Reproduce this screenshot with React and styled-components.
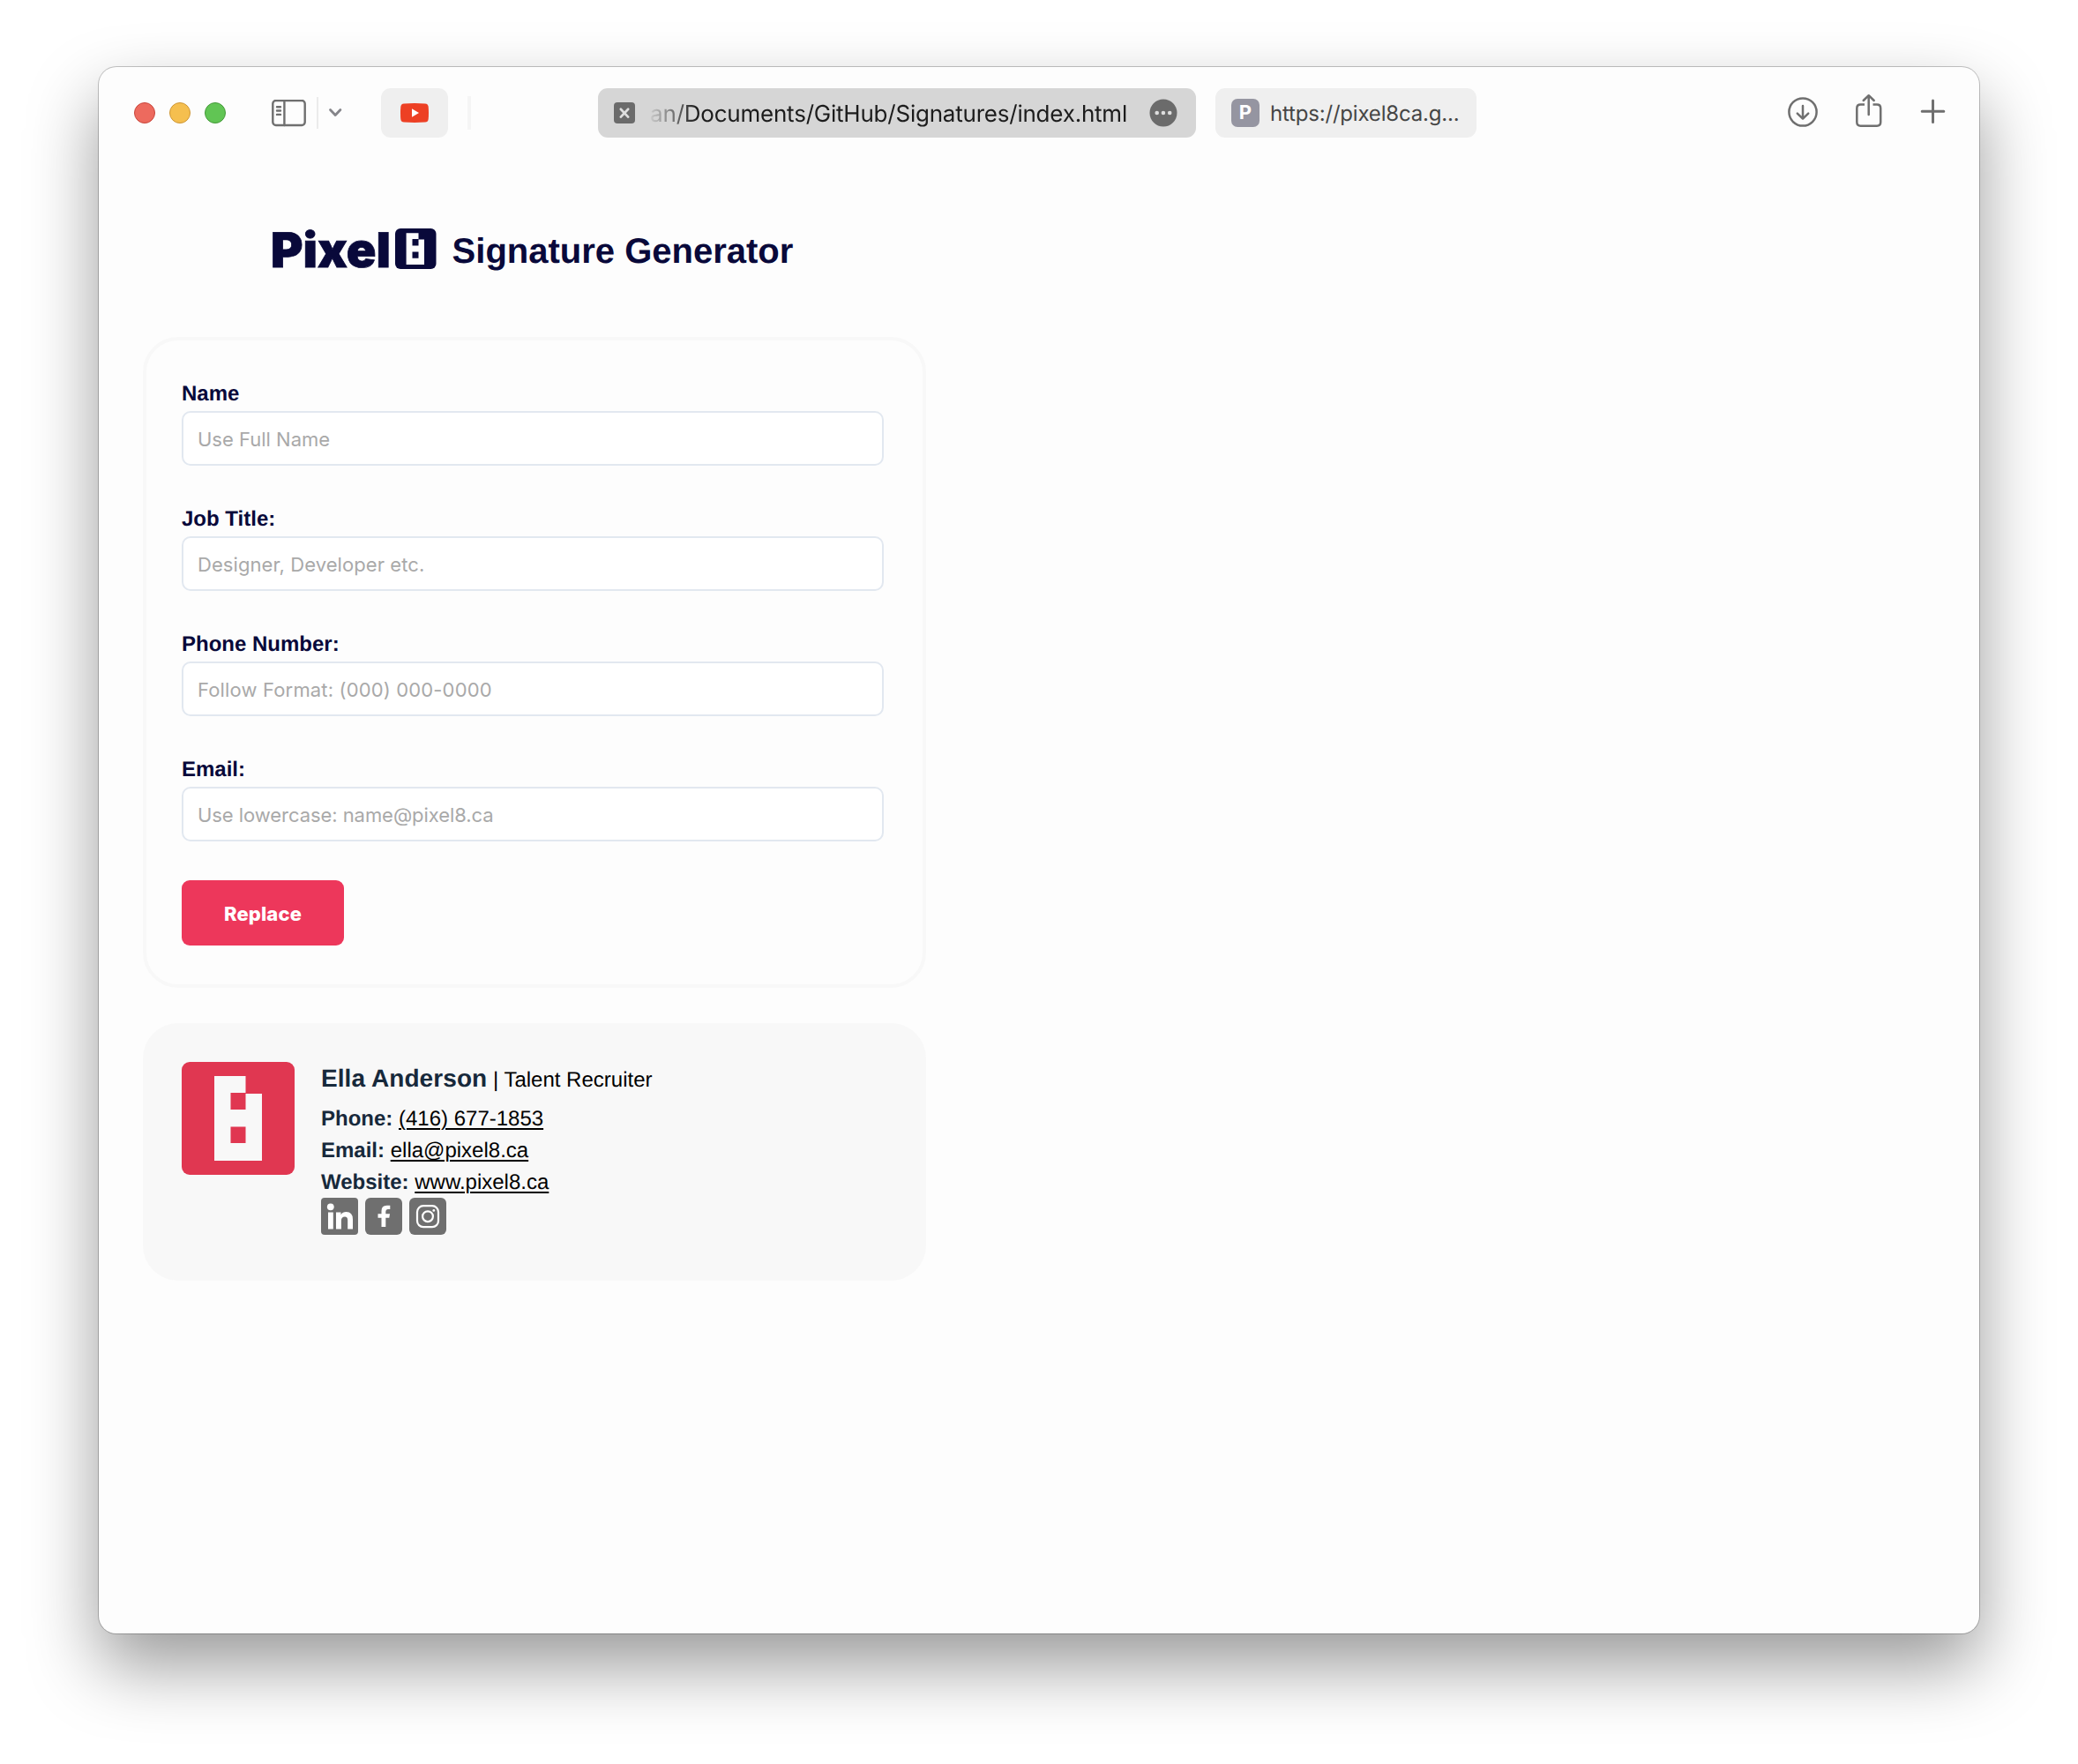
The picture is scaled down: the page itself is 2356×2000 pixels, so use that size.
import React from "react";
import styled, { createGlobalStyle, css } from "styled-components";

const ui = `Inter, "Liberation Sans", sans-serif`;
const arial = `"Liberation Sans", Arial, sans-serif`;

const GlobalStyle = createGlobalStyle`
  * { box-sizing: border-box; }
  body { margin: 0; background: #fff; text-rendering: geometricPrecision; }
`;

const Desktop = styled.div`
  width: 2356px;
  height: 2000px;
  padding: 76px 112px 148px;
  overflow: hidden;
`;

const Window = styled.div`
  height: 1776px;
  border-radius: 20px;
  background: #fdfdfd;
  box-shadow: 0 0 0 1px rgba(0, 0, 0, 0.22), 0 37px 80px rgba(0, 0, 0, 0.4);
`;

const Toolbar = styled.header`
  height: 104px;
  display: flex;
  align-items: center;
  padding: 0 38px 0 40px;
  font-family: ${ui};
`;

const Lights = styled.div`
  display: flex;
  gap: 16px;
`;

const Light = styled.span`
  width: 24px;
  height: 24px;
  border-radius: 50%;
  background: ${(p) => p.$fill};
  border: 1px solid ${(p) => p.$edge};
`;

const Divider = styled.span`
  width: ${(p) => p.$w}px;
  height: ${(p) => p.$h}px;
  background: ${(p) => p.$color};
`;

const SidebarGroup = styled.div`
  display: flex;
  align-items: center;
  margin-left: 52px;
  width: 80px;
  justify-content: space-between;
`;

const PinnedTab = styled.div`
  width: 76px;
  height: 56px;
  margin: 0 22px 0 44px;
  border-radius: 11px;
  background: #efefef;
  display: flex;
  align-items: center;
  justify-content: center;
`;

const Tab = styled.div`
  height: 56px;
  border-radius: 11px;
  display: flex;
  align-items: center;
  white-space: nowrap;
  ${(p) =>
    p.$active
      ? css`
          width: 678px;
          margin-left: 144px;
          padding: 0 21px 0 18px;
          background: #d6d6d6;
        `
      : css`
          width: 296px;
          margin-left: 22px;
          padding: 0 18px;
          background: #efefef;
        `}
`;

const Address = styled.span`
  flex: 1;
  display: flex;
  justify-content: flex-end;
  margin: 4px 25px 0 14px;
  font-size: 26px;
  line-height: 36px;
  letter-spacing: -0.22px;
  color: #1c1c1c;
  mask-image: linear-gradient(to right, transparent 0, #000 56px);
`;

const TabTitle = styled.span`
  margin: 1px 0 0 12px;
  font-size: 24px;
  line-height: 36px;
  letter-spacing: -0.19px;
  color: #454545;
`;

const Favicon = styled.span`
  width: 32px;
  height: 32px;
  border-radius: 7px;
  background: #9595a1;
  color: #fff;
  font-size: 22px;
  font-weight: 700;
  line-height: 33px;
  text-align: center;
`;

const Actions = styled.div`
  margin-left: auto;
  display: flex;
  align-items: center;
`;

const Page = styled.main`
  width: 938px;
  padding: 74px 0 0 50px;
  font-family: ${arial};
`;

const Heading = styled.h1`
  margin: 0;
  height: 54px;
  padding: 0 3px 0 0;
  display: flex;
  justify-content: center;
  gap: 18px;
  font-size: 40px;
  line-height: 62px;
  font-weight: 700;
  color: #09093a;
  white-space: nowrap;
`;

const FormCard = styled.form`
  margin-top: 74px;
  height: 738px;
  padding: 41px 44px 0 40px;
  border: 4px solid #f8f8f8;
  border-radius: 40px;
`;

const Field = styled.label`
  display: block;
  height: 142px;
  font-size: 24px;
  line-height: 40px;
  font-weight: 700;
  color: #09093a;
`;

const Input = styled.input`
  display: block;
  width: 100%;
  height: 62px;
  margin-top: -1px;
  padding: 2px 16px 0;
  border: 2px solid #e2e8f0;
  border-radius: 10px;
  background: #fff;
  font-family: ${ui};
  font-size: 22px;
  letter-spacing: ${(p) => p.$track}px;
  outline: none;
  &::placeholder { color: #a9a9a9; opacity: 1; }
`;

const Submit = styled.button`
  display: block;
  width: 184px;
  height: 74px;
  margin-top: 3px;
  padding: 2px 0 0;
  border: 0;
  border-radius: 9px;
  background: #ed375b;
  color: #fff;
  font-family: ${ui};
  font-size: 22px;
  font-weight: 800;
  letter-spacing: 0.15px;
`;

const SignatureCard = styled.section`
  margin-top: 40px;
  height: 292px;
  padding: 44px;
  border-radius: 40px;
  background: #f8f8f8;
  display: flex;
  gap: 30px;
`;

const Details = styled.div`
  padding-top: 1px;
  font-size: 24px;
  line-height: 36px;
  color: #000;
  white-space: nowrap;
`;

const Person = styled.div`
  height: 46px;
  line-height: 36px;
`;

const Strong = styled.strong`
  color: #17293b;
  font-size: ${(p) => (p.$large ? 28 : 24)}px;
  letter-spacing: ${(p) => (p.$large ? 0.08 : 0)}px;
`;

const Link = styled.a`
  color: #000;
  text-decoration: underline;
  text-decoration-thickness: 1.5px;
  text-underline-offset: 3px;
`;

const Socials = styled.div`
  margin-top: -1px;
  display: flex;
  gap: 8px;
`;

const SoftGlyph = styled.g`
  filter: blur(0.6px);
`;

const Logo = styled.svg`
  overflow: visible;
  flex: none;
`;

const BrandLogo = () => (
  <Logo width="185" height="52" viewBox="0 0 185 52">
    <text x="-3" y="48.500" fontFamily="Inter, sans-serif" fontWeight="900" fontSize="54.500" textLength="136" lengthAdjust="spacingAndGlyphs" fill="#09093a" stroke="#09093a" strokeWidth="0.800">Pixel</text>
    <rect x="138" y="5" width="46.500" height="46" rx="6" fill="#09093a" />
    <path fill="#fdfdfd" fillRule="evenodd" d="M150.600 10.300H164.500V17.600H171V46H150.600ZM157.500 17V24.500H164.500V17ZM157.500 31.600V38.700H164.500V31.600Z" />
  </Logo>
);

const SignatureLogo = () => (
  <svg width="128" height="128" viewBox="0 0 128 128">
    <rect width="128" height="128" rx="9" fill="#e03751" />
    <path fill="#f8f8f8" fillRule="evenodd" d="M37 16H72.500V36H91V112H37ZM55.500 35V54H72.500V35ZM55.500 73.500V92H72.500V73.500Z" />
  </svg>
);

const SidebarIcon = () => (
  <svg width="39" height="31" viewBox="0 0 39 31" fill="none" stroke="#6f6f6f" strokeWidth="2.400" strokeLinecap="round">
    <rect x="1.300" y="1" width="36.400" height="28" rx="3.500" />
    <path d="M14.400 1.200V29M6 8.200H10M6 12.500H10M6 16.900H10" />
  </svg>
);

const ChevronIcon = () => (
  <svg width="16" height="12" viewBox="0 0 16 12" fill="none" stroke="#85858a" strokeWidth="2.800" strokeLinecap="round" strokeLinejoin="round">
    <path d="M2.500 2.500L8.200 8.500L13.900 2.500" />
  </svg>
);

const YoutubeIcon = () => (
  <svg width="32" height="22" viewBox="0 0 32 22">
    <path d="M4 .4Q16-.4 28 .4Q31.400.8 31.700 4Q32.300 11 31.700 18Q31.400 21.200 28 21.600Q16 22.400 4 21.600Q.6 21.200.3 18Q-.3 11 .3 4Q.6.800 4 .4Z" fill="#ed4024" />
    <path d="M13 6.200L21 11L13 15.800Z" fill="#fff" />
  </svg>
);

const CloseIcon = () => (
  <svg width="24" height="24" viewBox="0 0 24 24">
    <rect width="24" height="24" rx="4" fill="#6b6b6b" />
    <path d="M7.800 7.800L16.200 16.600M16.200 7.800L7.800 16.600" stroke="#dedede" strokeWidth="2.700" strokeLinecap="round" />
  </svg>
);

const MoreIcon = () => (
  <svg width="32" height="32" viewBox="0 0 32 32">
    <circle cx="16" cy="16" r="15.500" fill="#6b6b6b" />
    <g fill="#dedede">
      <circle cx="8.700" cy="16" r="2.300" />
      <circle cx="15.900" cy="16" r="2.300" />
      <circle cx="23.200" cy="16" r="2.300" />
    </g>
  </svg>
);

const ActionIcons = () => (
  <svg width="180" height="44" viewBox="0 0 180 44" fill="none" stroke="#6f6f6f" strokeWidth="2.500" strokeLinecap="round" strokeLinejoin="round">
    <circle cx="18" cy="21" r="15.600" />
    <path d="M18 14V28.500M11.800 22.700L18 28.700L24.200 22.700" />
    <path strokeLinecap="butt" d="M88 12.600H83.500Q79.300 12.600 79.300 16.800V32.600Q79.300 36.800 83.500 36.800H102Q106.200 36.800 106.200 32.600V16.800Q106.200 12.600 102 12.600H97.500" />
    <path d="M92.700 24V2.800M86.700 8L92.700 2.200L98.700 8" />
    <path d="M165.500 8V32.500M153.200 20.300H177.800" strokeWidth="3" />
  </svg>
);

const SocialIcon = ({ kind }) => (
  <svg width="42" height="42" viewBox="0 0 42 42">
    <rect width="42" height="42" rx={kind === "in" ? 4 : 6} fill="#6f6f6f" />
    {kind === "in" && (
      <SoftGlyph fill="#fff">
        <circle cx="10.800" cy="10.300" r="3.900" />
        <path d="M8 16.500H13.800V35.500H8ZM17 16.500H22.500V19.200Q24.500 16 28.500 16Q36 16 36 24.500V35.500H30.200V25.500Q30.200 21.500 27 21.500Q22.900 21.500 22.900 26V35.500H17Z" />
      </SoftGlyph>
    )}
    {kind === "fb" && (
      <path fill="#fff" d="M18.500 33V22.800H14.500V18.300H18.500V15Q18.500 8.700 24.500 8.700H28.300V13H25.700Q23.300 13 23.300 15.500V18.300H28L27.300 22.800H23.300V33Z" />
    )}
    {kind === "ig" && (
      <g fill="none" stroke="#fff" strokeWidth="2.200">
        <rect x="9" y="9.200" width="24" height="24" rx="7" />
        <circle cx="21" cy="21.200" r="5.900" />
        <circle cx="27.800" cy="14.400" r="1.400" fill="#fff" stroke="none" />
      </g>
    )}
  </svg>
);

const fields = [
  { label: "Name", hint: "Use Full Name", track: 0 },
  { label: "Job Title:", hint: "Designer, Developer etc.", track: 0.08 },
  { label: "Phone Number:", hint: "Follow Format: (000) 000-0000", track: 0.15 },
  { label: "Email:", hint: "Use lowercase: name@pixel8.ca", track: -0.06 },
];

const contacts = [
  ["Phone:", "(416) 677-1853"],
  ["Email:", "ella@pixel8.ca"],
  ["Website:", "www.pixel8.ca"],
];

export default function App() {
  return (
    <Desktop>
      <GlobalStyle />
      <Window>
        <Toolbar>
          <Lights>
            <Light $fill="#ed6a5e" $edge="#c9463c" />
            <Light $fill="#f5bf4f" $edge="#cf9736" />
            <Light $fill="#61c554" $edge="#459a3a" />
          </Lights>
          <SidebarGroup>
            <SidebarIcon />
            <Divider $w={2} $h={36} $color="#ebebeb" />
            <ChevronIcon />
          </SidebarGroup>
          <PinnedTab><YoutubeIcon /></PinnedTab>
          <Divider $w={4} $h={38} $color="#f5f5f5" />
          <Tab $active>
            <CloseIcon />
            <Address>an/Documents/GitHub/Signatures/index.html</Address>
            <MoreIcon />
          </Tab>
          <Tab>
            <Favicon>P</Favicon>
            <TabTitle>https://pixel8ca.g...</TabTitle>
          </Tab>
          <Actions><ActionIcons /></Actions>
        </Toolbar>
        <Page>
          <Heading><BrandLogo />Signature Generator</Heading>
          <FormCard>
            {fields.map(({ label, hint, track }) => (
              <Field key={label}>
                {label}
                <Input placeholder={hint} $track={track} />
              </Field>
            ))}
            <Submit type="button">Replace</Submit>
          </FormCard>
          <SignatureCard>
            <SignatureLogo />
            <Details>
              <Person><Strong $large>Ella Anderson</Strong> | Talent Recruiter</Person>
              {contacts.map(([label, value]) => (
                <div key={label}><Strong>{label}</Strong> <Link>{value}</Link></div>
              ))}
              <Socials>
                <SocialIcon kind="in" />
                <SocialIcon kind="fb" />
                <SocialIcon kind="ig" />
              </Socials>
            </Details>
          </SignatureCard>
        </Page>
      </Window>
    </Desktop>
  );
}
